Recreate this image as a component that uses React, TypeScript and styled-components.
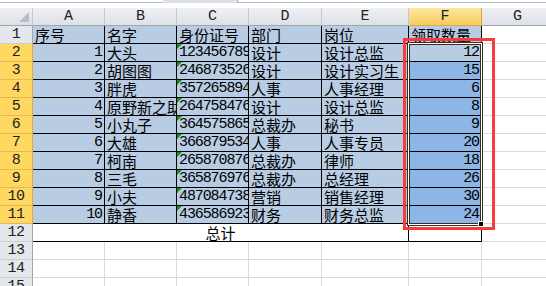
import styled, { createGlobalStyle } from 'styled-components'

type Fill = 'white' | 'blue' | 'sel'

const fills: Record<Fill, string> = {
  white: '#ffffff',
  blue: '#b8cce4',
  sel: '#8db6e6',
}

const rows: [number, string, string, string, string, number][] = [
  [1, '大头', '123456789', '设计', '设计总监', 12],
  [2, '胡图图', '246873526', '设计', '设计实习生', 15],
  [3, '胖虎', '357265894', '人事', '人事经理', 6],
  [4, '原野新之助', '264758476', '设计', '设计总监', 8],
  [5, '小丸子', '364575865', '总裁办', '秘书', 9],
  [6, '大雄', '366879534', '人事', '人事专员', 20],
  [7, '柯南', '265870876', '总裁办', '律师', 18],
  [8, '三毛', '365876976', '总裁办', '总经理', 26],
  [9, '小夫', '487084738', '营销', '销售经理', 30],
  [10, '静香', '436586923', '财务', '财务总监', 24],
]

const letters = ['A', 'B', 'C', 'D', 'E', 'F', 'G']
const headings = ['序号', '名字', '身份证号', '部门', '岗位', '领取数量']

const GlobalStyle = createGlobalStyle`
  html, body {
    margin: 0;
    padding: 0;
    background: #fff;
    overflow: hidden;
  }
`

const Sheet = styled.div`
  position: relative;
  width: 546px;
  height: 286px;
  overflow: hidden;
  background: #fff;
`

const TopStrip = styled.div`
  height: 8px;
  display: flex;
  align-items: flex-start;
`

const StripLine = styled.div<{ $w?: number }>`
  height: 2px;
  flex: ${p => (p.$w ? `0 0 ${p.$w}px` : '1')};
  border-bottom: 1px solid #b4bac2;
`

const Grip = styled.div`
  flex: 0 0 74px;
  height: 3px;
  background: #dde1e6;
  border-bottom-left-radius: 6px;
  border-right: 1px solid #a9b0b8;
`

/* row header, A..G, and one more column that runs off the right edge */
const Grid = styled.div`
  display: grid;
  grid-template-columns: 33px 72px 72px 72px 73px 87px 73px 72px 80px;
  grid-auto-rows: 18px;
`

const ColHead = styled.div<{ $sel?: boolean }>`
  box-sizing: border-box;
  text-align: center;
  line-height: 18px;
  font-family: 'Liberation Mono', monospace;
  font-size: 15px;
  color: #222;
  background: ${p =>
    p.$sel
      ? 'linear-gradient(#fde7a0, #f8cc5c)'
      : 'linear-gradient(#eef0f3, #dde1e6)'};
  border-right: 1px solid ${p => (p.$sel ? '#e2a63c' : '#c3c8ce')};
  border-bottom: 1px solid ${p => (p.$sel ? '#e2a63c' : '#9fa6ae')};
`

const Corner = styled(ColHead)`
  position: relative;
  &::after {
    content: '';
    position: absolute;
    right: 3px;
    bottom: 3px;
    border-style: solid;
    border-width: 0 0 10px 10px;
    border-color: transparent transparent #b7bdc4 transparent;
  }
`

const RowHead = styled.div<{ $sel?: boolean }>`
  box-sizing: border-box;
  text-align: center;
  line-height: 18px;
  font-family: 'Liberation Mono', monospace;
  font-size: 15px;
  letter-spacing: -0.5px;
  color: #222;
  background: ${p => (p.$sel ? '#ffd862' : '#e4e7eb')};
  border-right: 1px solid ${p => (p.$sel ? '#e2a63c' : '#9fa6ae')};
  border-bottom: 1px solid ${p => (p.$sel ? '#eab652' : '#c9ced4')};
`

const Cell = styled.div<{
  $fill?: Fill
  $align?: 'left' | 'right' | 'center'
  $num?: boolean
  $black?: boolean
  $span?: number
  $flag?: boolean
}>`
  box-sizing: border-box;
  position: relative;
  grid-column: span ${p => p.$span ?? 1};
  padding: 0 2px;
  white-space: nowrap;
  overflow: hidden;
  color: #000;
  text-align: ${p => p.$align ?? 'left'};
  background: ${p => fills[p.$fill ?? 'white']};
  border-right: 1px solid ${p => (p.$black ? '#000' : '#d9d9d9')};
  border-bottom: 1px solid ${p => (p.$black ? '#000' : '#d9d9d9')};
  font-family: ${p =>
    p.$num ? "'Liberation Mono', monospace" : "'Noto Sans CJK SC', sans-serif"};
  font-size: 15px;
  letter-spacing: ${p => (p.$num ? '-1.1px' : '0')};
  line-height: 17px;

  &::before {
    content: '';
    display: ${p => (p.$flag ? 'block' : 'none')};
    position: absolute;
    left: 0;
    top: 0;
    border-style: solid;
    border-width: 5px 5px 0 0;
    border-color: #10901a transparent transparent transparent;
  }
`

const Selection = styled.div`
  position: absolute;
  left: 407px;
  top: 42px;
  width: 76px;
  height: 184px;
  box-sizing: border-box;
  border: 1px solid #3b2e1f;
  box-shadow: inset 0 0 0 1px #fff, inset 0 0 0 2px #3b2e1f;
  pointer-events: none;
`

const FillHandle = styled.div`
  position: absolute;
  left: 478px;
  top: 221px;
  width: 6px;
  height: 6px;
  box-sizing: border-box;
  background: #000;
  border: 1px solid #fff;
`

const Callout = styled.div`
  position: absolute;
  left: 403px;
  top: 38px;
  width: 92px;
  height: 192px;
  box-sizing: border-box;
  border: 3px solid #f83a3a;
  pointer-events: none;
`

export default function App() {
  return (
    <Sheet>
      <GlobalStyle />
      <TopStrip>
        <StripLine $w={163} />
        <Grip />
        <StripLine />
      </TopStrip>
      <Grid>
        <Corner />
        {letters.map(l => (
          <ColHead key={l} $sel={l === 'F'}>
            {l}
          </ColHead>
        ))}
        <ColHead />

        <RowHead>1</RowHead>
        {headings.map(h => (
          <Cell key={h} $fill="blue" $black>
            {h}
          </Cell>
        ))}
        <Cell />
        <Cell />

        {rows.map(([n, name, id, dept, job, qty], i) => (
          <Row key={n} index={i + 2} n={n} name={name} id={id} dept={dept} job={job} qty={qty} />
        ))}

        <RowHead>12</RowHead>
        <Cell $span={5} $black $align="center">
          总计
        </Cell>
        <Cell $black />
        <Cell />
        <Cell />

        {[13, 14, 15].map(r => (
          <EmptyRow key={r} index={r} />
        ))}
      </Grid>
      <Selection />
      <FillHandle />
      <Callout />
    </Sheet>
  )
}

function Row(props: {
  index: number
  n: number
  name: string
  id: string
  dept: string
  job: string
  qty: number
}) {
  const { index, n, name, id, dept, job, qty } = props
  return (
    <>
      <RowHead $sel>{index}</RowHead>
      <Cell $fill="blue" $black $align="right" $num>
        {n}
      </Cell>
      <Cell $fill="blue" $black>
        {name}
      </Cell>
      <Cell $fill="blue" $black $num $flag>
        {id}
      </Cell>
      <Cell $fill="blue" $black>
        {dept}
      </Cell>
      <Cell $fill="blue" $black>
        {job}
      </Cell>
      <Cell $fill={index === 2 ? 'blue' : 'sel'} $black $align="right" $num>
        {qty}
      </Cell>
      <Cell />
      <Cell />
    </>
  )
}

function EmptyRow({ index }: { index: number }) {
  return (
    <>
      <RowHead>{index}</RowHead>
      {letters.map(l => (
        <Cell key={l} />
      ))}
      <Cell />
    </>
  )
}
